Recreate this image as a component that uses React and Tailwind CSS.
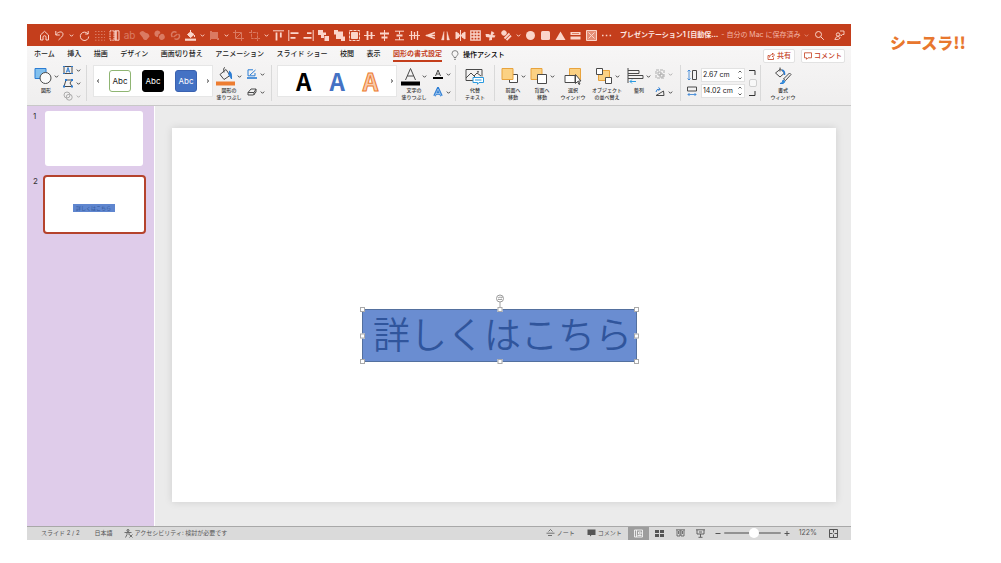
import React from 'react';
import { clsx } from 'clsx';

const Svg = ({ w = 11, h = 11, className, children }) => (
    <svg
        width={w}
        height={h}
        viewBox={`0 0 ${w} ${h}`}
        fill="none"
        stroke="currentColor"
        strokeWidth="1"
        className={clsx('shrink-0', className)}
        aria-hidden="true"
    >
        {children}
    </svg>
);

const Chevron = ({ className }) => (
    <Svg w={5} h={5} className={className}>
        <path d="M.8 1.6 2.5 3.3 4.2 1.6" />
    </Svg>
);

const Solid = ({ d, className }) => (
    <Svg className={className}>
        <path d={d} fill="currentColor" stroke="none" />
    </Svg>
);

/* ---------- quick access bar ---------- */

const quickItems = [
    { name: 'ホーム', icon: <Svg><path d="M1.500 5 5.500 1.300 9.500 5v5H7V7.200a1.500 1.500 0 0 0-3 0V10H1.500z" /></Svg> },
    { name: '元に戻す', icon: <Svg><path d="M1.800 1v4h4M2 4.800C4 1.200 9 1 9 4.200c0 2-2 3.300-4.500 5.800" /></Svg>, menu: true },
    { name: 'やり直し', icon: <Svg><path d="M9.200 1v3h-3M9 4A4.200 4.200 0 1 0 9.700 6.500" /></Svg> },
    { name: 'グリッド', dim: true, icon: <Svg><path d="M1 1.500h10M1 4.500h10M1 7.500h10M1 10.200h10" strokeDasharray="1.500 1.500" /></Svg> },
    { name: '選択', icon: <Svg><path d="M1 .8h5M1 10.200h5M1 1v9M5 1v9" strokeDasharray="1.500 .8" /><path d="M6 .8h4v9.400H6z" /><path d="M7 1v9" strokeWidth="1.500" /></Svg> },
    { name: '置換', dim: true, icon: <span className="text-[10px] leading-[11px]">ab</span> },
    { name: '接合', dim: true, icon: <Solid d="M.5 3.500Q1 1 4 1l3 2q3 0 3.500 3.500L7.500 10Q4 10 4 8z" /> },
    { name: '型抜き', dim: true, icon: <Solid d="M.5 4a3 3 0 0 1 6-1L4.500 4.500 4 7A3 3 0 0 1 .5 4zM5 6l2-2a3 3 0 1 1-2 4z" /> },
    { name: '重なり抽出', dim: true, icon: <Svg><path d="M6.500 2.500a3 3 0 1 0-4 4.500M4.500 8.500a3 3 0 1 0 4-4.500M3.500 7 7.500 4" strokeWidth="1.500" /></Svg> },
    { name: '塗りつぶし', icon: <Svg><path d="M0 9.700h11" strokeWidth="2.200" /><path d="m2.500 4.500 3-2.500L9 4.500 5.500 7.500zM5.500 0v4M9.500 5v2" fill="currentColor" /></Svg>, menu: true },
    { name: '図形の変更', dim: true, icon: <Solid d="M1 1h2v1h6v6h1v2H8V9H2v1H1z" />, menu: true },
    { name: 'トリミング', dim: true, icon: <Svg><path d="M2.500 0v8.500H11M0 2.500h8.500V11M8 3 3 8" /></Svg> },
    { name: '縦横比', dim: true, icon: <Svg><path d="M2.500 0v8.500H11M0 2.500h8.500V11" strokeDasharray="3 .8" /></Svg>, menu: true },
    { name: '上揃え', icon: <Svg><path d="M0 .8h11" /><path d="M3.500 2.500v8M7.800 2.500v5" strokeWidth="1.800" /></Svg> },
    { name: '左揃え', icon: <Svg><path d="M.8 0v11" /><path d="M2.500 3.200h8M2.500 7.800h5" strokeWidth="1.800" /></Svg> },
    { name: '右揃え', icon: <Svg><path d="M10.200 0v11" /><path d="M8.500 3.200H4M8.500 7.800H.5" strokeWidth="1.800" /></Svg> },
    { name: '前面へ移動', icon: <Solid d="M0 0h5v2.500h3V5H6v3H3V5H0zM6.500 6H11v5H6.500z" /> },
    { name: '背面へ移動', icon: <Solid d="M0 0h4v1.500h5V6.500h2V11H7V9H2V4.500H0z" /> },
    { name: '最前面', icon: <Svg><path d="M.5.5h10v10H.5z" strokeDasharray="3 1" /><path d="M2.500 2.500h6v6h-6z" fill="currentColor" /></Svg> },
    { name: '左右整列', icon: <Svg><path d="M3.500 1v9M7.500 2v7" strokeWidth="1.800" /><path d="M0 5.500h11" /></Svg> },
    { name: '上下中央', icon: <Svg><path d="M1 3.500h9M2.500 7.500h6" strokeWidth="1.800" /><path d="M5.500 0v11" /></Svg> },
    { name: '上下整列', icon: <Svg><path d="M1 1.200h9M1 9.800h9M5.500 1v3M5.500 7v3" /><path d="M2.500 5.500h6" strokeWidth="2" /></Svg> },
    { name: '左右中央', icon: <Svg><path d="M2.500 1v9M5.500 2v7M8.500 1v9" strokeWidth="1.300" /><path d="M0 5.500h11" /></Svg> },
    { name: '左右反転', icon: <Svg><path d="M10 2.500 2 5.500l8 3M1 5.500h9" strokeWidth="1.400" /></Svg> },
    { name: '上下反転', icon: <Svg><path d="M4 1.500 1.500 10H4zM7 1.500 9.500 10H7z" fill="currentColor" strokeWidth=".4" /></Svg> },
    { name: '分割', icon: <Svg><path d="M5.500 0v11M2 5.500h7" /><path d="M1 2v7l3-2V4zM10 2v7L7 7V4z" fill="currentColor" /></Svg> },
    { name: '表', icon: <Svg><path d="M.8.800h9.400v9.400H.8zM.8 4h9.400M.8 7h9.400M4 .8v9.400M7 .8v9.400" strokeWidth="1.300" /></Svg> },
    { name: '回転', icon: <Solid d="M.5 4h3l2 1 1-4 3 2-2 2 3 .5-1 2H7v2.500l-3 .5.500-3L1 7z" /> },
    { name: '図形', icon: <Svg><circle cx="3" cy="3" r="2.300" fill="currentColor" /><path d="M3.500 8.500 8.500 3.500M5.500 10.200l4.500-4.500" strokeWidth="1.900" /></Svg>, menu: true },
    { name: '円', icon: <Solid d="M5.500 1a4.500 4.500 0 1 1 0 9 4.500 4.500 0 0 1 0-9z" /> },
    { name: '四角形', icon: <Solid d="M2.500 1h6q1.500 0 1.500 1.500v6Q10 10 8.500 10h-6Q1 10 1 8.500v-6Q1 1 2.500 1z" /> },
    { name: '三角形', icon: <Solid d="M5.500 1.500 10.500 10H.5z" /> },
    { name: 'テキスト', icon: <Svg><path d="M.5 3.500h10M.5 8h10" strokeWidth="3" /><path d="M2 3.500h7" stroke="#d9694a" strokeWidth=".8" /></Svg> },
    { name: '削除', icon: <Svg><path d="M.5.5h10v10H.5z" fill="#e58d75" /><path d="m2.500 2.500 6 6M8.500 2.500l-6 6" /></Svg> },
    { name: 'その他', icon: <Svg><path d="M1 5.500h1.500M4.800 5.500h1.500M8.600 5.500h1.500" strokeWidth="1.500" /></Svg> },
];

const TitleBar = () => (
    <header className="flex h-[22px] items-center bg-[#c43e1c] pl-3 pr-[6px] text-[#fbd5ca]">
        <div className="flex w-[573px] shrink-0 items-center justify-between">
            {quickItems.map((item) => (
                <React.Fragment key={item.name}>
                    <button
                        aria-label={item.name}
                        className={clsx('flex w-[11px] justify-center', item.dim && 'opacity-40')}
                    >
                        {item.icon}
                    </button>
                    {item.menu && <Chevron />}
                </React.Fragment>
            ))}
        </div>
        <h1 className="ml-2 flex items-center gap-[3px] whitespace-nowrap text-[7px] leading-[10px]">
            <span className="font-bold text-[#fde9e4]">プレゼンテーション1 [自動保…</span>
            <span className="text-[#f3b5a5]">- 自分の Mac に保存済み</span>
            <Chevron className="opacity-50" />
        </h1>
        <div className="ml-auto flex items-center gap-[9px]">
            <button aria-label="検索">
                <Svg><circle cx="4.500" cy="4.500" r="3" /><path d="m6.800 6.800 3 3" /></Svg>
            </button>
            <button aria-label="共同編集">
                <Svg><circle cx="4" cy="4.500" r="1.700" /><path d="M.8 9.500q1-3 3-3t2.500 1.500q-1 2-5.500 1.500zM6 1h4v3.500H8.500L7 6V4.500" strokeWidth=".9" /></Svg>
            </button>
        </div>
    </header>
);

/* ---------- tabs ---------- */

const tabs = [
    'ホーム', '挿入', '描画', 'デザイン', '画面切り替え', 'アニメーション',
    'スライド ショー', '校閲', '表示', '図形の書式設定',
];

const Tabs = () => (
    <nav className="flex h-[17px] items-center pl-[7px] pr-[6px] text-[7px] font-medium leading-[10px]">
        <div className="flex w-[408px] shrink-0 justify-between whitespace-nowrap">
            {tabs.map((tab) => (
                <a
                    key={tab}
                    href="#"
                    className={clsx(
                        'border-b-2 pt-[2px] pb-px',
                        tab === '図形の書式設定'
                            ? 'border-[#c43e1c] font-bold text-[#c43e1c]'
                            : 'border-transparent text-[#222]',
                    )}
                >
                    {tab}
                </a>
            ))}
        </div>
        <button className="ml-[9px] flex items-center gap-1 whitespace-nowrap">
            <Svg w={8} h={10} className="text-[#666]">
                <path d="M3 7.500C3 6 1 5.500 1 3.600a3 3 0 0 1 6 0C7 5.500 5 6 5 7.500zM3 9.300h2" strokeWidth=".8" />
            </Svg>
            操作アシスト
        </button>
        <div className="ml-auto mt-[2px] flex gap-[6px] text-[#c43e1c]">
            <button className="flex h-[14px] items-center gap-[2px] whitespace-nowrap rounded-xs border border-[#e2e2e2] bg-white px-[3px]">
                <Svg w={8} h={8}><path d="M2.500 3.500H1v4h5.500V5.500M2.500 5.500c0-2.500 1.500-3 3-3V1l2 2-2 2V3.800" strokeWidth=".8" /></Svg>
                共有
            </button>
            <button className="flex h-[14px] items-center gap-[2px] whitespace-nowrap rounded-xs border border-[#e2e2e2] bg-white px-[2px]">
                <Svg w={8} h={8}><path d="M.5.800h7v5H4L2.500 7.300V5.800h-2z" strokeWidth=".8" /></Svg>
                コメント
            </button>
        </div>
    </nav>
);

/* ---------- ribbon ---------- */

const Group = ({ className, children }) => (
    <div className={clsx('flex h-9 shrink-0 border-r border-[#d9d9d9]', className)}>{children}</div>
);

const Tool = ({ icon, label, menu, className }) => (
    <button className={clsx('flex shrink-0 flex-col items-center', className)}>
        <span className="flex h-[22px] items-center gap-[2px] text-[#4a4a4a]">
            {icon}
            {menu && <Chevron />}
        </span>
        {label.map((line) => (
            <span key={line} className="whitespace-nowrap text-[5px] leading-[7px] font-medium">{line}</span>
        ))}
    </button>
);

const MiniTool = ({ name, icon, dim }) => (
    <button aria-label={name} className={clsx('flex items-center gap-[3px] text-[#4a4a4a]', dim && 'opacity-40')}>
        {icon}
        <Chevron />
    </button>
);

const Next = () => (
    <button aria-label="次のスタイル" className="ml-auto">
        <Svg w={4} h={6}><path d="M1 1.500 2.700 3 1 4.500" /></Svg>
    </button>
);

const styleSwatches = [
    'border-[#8fb573] bg-white text-[#222]',
    'border-black bg-black text-white',
    'border-[#3a62b0] bg-[#4472c4] text-white',
];

const Ribbon = () => (
    <section className="flex items-start border-b border-[#c8c8c8] pb-1 pt-[2px] text-[#333]" aria-label="リボン">
        <Group className="w-[60px] pl-[4px]">
            <Tool
                className="w-[30px]"
                label={['図形']}
                menu
                icon={
                    <Svg w={18} h={18}>
                        <path d="M1 1.500h11v10H1z" fill="#83c1ee" stroke="#2b7cd3" />
                        <circle cx="11.500" cy="11" r="5.500" fill="#fafafa" />
                    </Svg>
                }
            />
            <div className="ml-[2px] flex flex-col justify-between">
                <MiniTool name="テキスト ボックス" icon={<Svg w={10} h={10}><path d="M1 1.500h8v7H1z" /><path d="m3.300 7.500 1.700-5 1.700 5M4 6h2M0 1.500h2M8 1.500h2M0 8.500h2M8 8.500h2" stroke="#2b7cd3" /></Svg>} />
                <MiniTool name="図形の編集" icon={<Svg w={10} h={10}><path d="M3 2h6L7 5l2 3.500H1z" /><path d="M2 1h2v2H2zM8 1h2v2H8zM0 7.500h2V9.500H0zM8 7.500h2V9.500H8z" fill="#2b7cd3" stroke="none" /></Svg>} />
                <MiniTool name="図形の結合" dim icon={<Svg w={10} h={10}><circle cx="4" cy="4" r="3" /><circle cx="6.200" cy="6.200" r="3" /></Svg>} />
            </div>
        </Group>

        <Group className="w-[185px] pl-[6px]">
            <div className="flex h-8 w-[120px] items-center border border-[#e6e6e6] bg-white px-[2px]">
                <button aria-label="前のスタイル"><Svg w={4} h={6}><path d="M3 1.500 1.300 3 3 4.500" /></Svg></button>
                <div className="ml-[9px] flex gap-[11px]">
                    {styleSwatches.map((swatch) => (
                        <button key={swatch} className={clsx('h-[22px] w-[22px] rounded-[3px] border text-[8px] leading-[18px]', swatch)}>
                            Abc
                        </button>
                    ))}
                </div>
                <Next />
            </div>
            <Tool
                className="ml-px w-[30px]"
                label={['図形の', '塗りつぶし']}
                menu
                icon={
                    <Svg w={19} h={19}>
                        <path d="M4 7.500 10 2.500l4 6L8 12.500zM9 .5q-2 0-1 5" />
                        <path d="M13 4q3 1 2.500 8-1-3-3-4" fill="#2b7cd3" stroke="#2b7cd3" />
                        <path d="M0 16.500h19" stroke="#ed7d31" strokeWidth="4" />
                    </Svg>
                }
            />
            <div className="ml-[3px] flex flex-col justify-around">
                <MiniTool name="枠線" icon={<Svg w={10} h={10}><path d="M6 .8H1v6h7V4M3 6l5.500-5" stroke="#2b7cd3" /><path d="M0 9h10" stroke="#2b7cd3" strokeWidth="1.600" /></Svg>} />
                <MiniTool name="効果" icon={<Svg w={10} h={10}><path d="M1 5.500 4 2h5L7 5.500zM1 5.500V8h5.500L9 5V2M7 5.500V8" /></Svg>} />
            </div>
        </Group>

        <Group className="w-[184px] pl-[5px]">
            <div className="flex h-8 w-[120px] items-center border border-[#e6e6e6] bg-white pl-[18px] pr-[2px] font-['Noto_Sans_CJK_JP',sans-serif] text-[24px] font-bold leading-[30px]">
                <div className="flex gap-[18px]">
                    <button className="text-black">A</button>
                    <button className="text-[#4472c4]">A</button>
                    <button className="text-[#f8cbad] [-webkit-text-stroke:1px_#ed7d31]">A</button>
                </div>
                <Next />
            </div>
            <Tool
                className="ml-[2px] w-[30px]"
                label={['文字の', '塗りつぶし']}
                menu
                icon={
                    <Svg w={19} h={19}>
                        <path d="M4.500 13 9.500 1.500l5 11.500M6.300 9h6.400" />
                        <path d="M0 16.500h19" stroke="#000" strokeWidth="4" />
                    </Svg>
                }
            />
            <div className="ml-1 flex flex-col justify-around">
                <MiniTool name="文字の輪郭" icon={<Svg w={10} h={10}><path d="M2.500 7 5 1l2.500 6M3.500 5h3" /><path d="M0 9h10" stroke="#000" strokeWidth="2" /></Svg>} />
                <MiniTool name="文字の効果" icon={<Svg w={10} h={10}><path d="M1.500 9 5 1.500 8.500 9M3 6.500h4" stroke="#2b7cd3" strokeWidth="2.600" /><path d="M1.700 9 5 2l3.300 7M3 6.500h4" stroke="#cfe3f7" strokeWidth=".6" /></Svg>} />
            </div>
        </Group>

        <Group className="w-[39px] justify-center">
            <Tool
                label={['代替', 'テキスト']}
                icon={
                    <Svg w={19} h={18}>
                        <path d="M17 9.500v-7H1v11h7M1 11l5-5 5 5M9 9l3-3 4 3" />
                        <circle cx="13" cy="4.800" r=".6" />
                        <path d="M8 10.500h10.500v5H14l-1.500 1.800V15.500H8z" fill="#fff" stroke="#2b9be0" />
                        <path d="M10 13h6.500" stroke="#2b9be0" />
                    </Svg>
                }
            />
        </Group>

        <Group className="w-[186px] pl-[3px]">
            <Tool
                className="w-[30px]"
                label={['前面へ', '移動']}
                menu
                icon={<Svg w={18} h={18}><path d="M8.500 7.500h8v8h-8z" fill="#fff" /><path d="M1 1.500h11v11H1z" fill="#fbd183" stroke="#e8a33d" /></Svg>}
            />
            <Tool
                className="w-[28px]"
                label={['背面へ', '移動']}
                menu
                icon={<Svg w={18} h={18}><path d="M1 1.500h11v11H1z" fill="#fbd183" stroke="#e8a33d" /><path d="M7.500 7.500h9v9h-9z" fill="#fff" /></Svg>}
            />
            <Tool
                className="w-[34px]"
                label={['選択', 'ウインドウ']}
                icon={
                    <Svg w={18} h={18}>
                        <path d="M5.500 1.500h11v11h-11z" fill="#fbd183" stroke="#e8a33d" />
                        <path d="M1 8.500h10v7H1z" fill="#fff" />
                        <path d="M11.500 7.500v9l2-2 1.500 3 1-.5-1.500-3H17z" fill="#fff" />
                    </Svg>
                }
            />
            <Tool
                className="w-[34px]"
                label={['オブジェクト', 'の並べ替え']}
                menu
                icon={
                    <Svg w={18} h={18}>
                        <path d="M3.500 3.500h11v10h-11z" fill="#fbd183" stroke="#e8a33d" />
                        <path d="M1.500 1.500h6v6h-6zM10.500 10.500h6v6h-6z" fill="#fff" />
                    </Svg>
                }
            />
            <Tool
                className="w-[30px]"
                label={['整列']}
                menu
                icon={
                    <Svg w={17} h={18}>
                        <path d="M1 1v15M1 3.500h11v3H1M1 8.500h15v3H1" />
                        <path d="M9 14.500H3M5 12.500l-2 2 2 2" stroke="#2b9be0" />
                    </Svg>
                }
            />
            <div className="ml-px flex flex-col justify-around">
                <MiniTool name="グループ化" dim icon={<Svg w={10} h={10}><path d="M1 1h8v8H1z" strokeDasharray="3 1" /><path d="M3 3h3v3H3zM5 5h3v3H5z" /></Svg>} />
                <MiniTool name="回転" icon={<Svg w={10} h={10}><path d="M9 8.500H1L8.500 4z" /><path d="M1 5q0-3 4-3M3.500.5 5.300 2 3.500 3.800" stroke="#2b7cd3" /></Svg>} />
            </div>
        </Group>

        <Group className="w-[80px] gap-1 pl-[6px]">
            <div className="flex flex-col justify-between py-1 text-[#4a4a4a]">
                <Svg w={10} h={12}><path d="M5.500 1.500h4v9h-4z" /><path d="M2 1v10M.5 2.500 2 1l1.500 1.500M.5 9.500 2 11l1.500-1.500" stroke="#2b7cd3" strokeWidth=".8" /></Svg>
                <Svg w={10} h={12}><path d="M.5 2h9v4h-9z" /><path d="M1 9.500h8M2.500 8 1 9.500 2.500 11M7.500 8 9 9.500 7.500 11" stroke="#2b7cd3" strokeWidth=".8" /></Svg>
            </div>
            <div className="flex flex-col justify-between py-[3px]">
                {[['高さ', '2.67 cm'], ['幅', '14.02 cm']].map(([name, value]) => (
                    <div key={name} className="flex h-[14px] w-[44px] items-center border border-[#e2e2e2] bg-white pl-px">
                        <input
                            aria-label={name}
                            defaultValue={value}
                            className="w-[34px] bg-transparent text-[7px] leading-[10px] text-[#222] outline-none"
                        />
                        <Svg w={6} h={12}><path d="M1.500 3.500 3 2l1.500 1.500M1.500 8.500 3 10l1.500-1.500" strokeWidth=".8" /></Svg>
                    </div>
                ))}
            </div>
            <div className="flex flex-col items-center justify-between py-1">
                <Svg w={8} h={6}><path d="M0 1.500h6V6" /></Svg>
                <input type="checkbox" aria-label="縦横比を固定" className="size-2 shrink-0 appearance-none rounded-xs border border-[#cfcfcf] bg-[#f8f8f8]" />
                <Svg w={8} h={6}><path d="M0 4.500h6V0" /></Svg>
            </div>
        </Group>

        <Tool
            className="ml-[7px] w-[30px]"
            label={['書式', 'ウィンドウ']}
            icon={
                <Svg w={18} h={18}>
                    <path d="M1.500 6 6.500 2l4 4L6 10zM6 .5v4" />
                    <path d="M8 3q3 1 2.500 5" stroke="#2b7cd3" strokeWidth="1.500" />
                    <path d="m9.500 12 6-6 1.500 1.500-5.500 6z" />
                    <path d="M6 16.500q3 0 3-3.500l2 1.500q-1 3-5 2z" fill="#2b9be0" stroke="#2b7cd3" />
                </Svg>
            }
        />
    </section>
);

/* ---------- workspace ---------- */

const Thumbnails = () => (
    <aside className="w-[128px] shrink-0 border-r border-white bg-[#dfccea] pl-[6px] pt-[5px] text-[8px] leading-[10px] text-[#333]">
        <a href="#" className="flex items-start gap-[7px]">
            <span className="w-[5px]">1</span>
            <span className="h-[55px] w-[98px] rounded-[3px] bg-white" />
        </a>
        <a href="#" className="mt-[9px] flex items-start gap-[5px]">
            <span className="w-[5px] pt-px">2</span>
            <span className="flex h-[59px] w-[103px] items-center justify-center rounded-[4px] border-2 border-[#b5432d] bg-white pr-[2px] pt-[7px]">
                <span className="h-2 w-[42px] bg-[#5f86cf] text-center text-[5px] leading-[8px] text-[#2f5597]">詳しくはこちら</span>
            </span>
        </a>
    </aside>
);

// selection handles, clockwise from the top left corner
const handles = [
    '-left-[3px] -top-[3px]',
    'left-1/2 -top-[3px] -translate-x-1/2',
    '-right-[3px] -top-[3px]',
    '-right-[3px] top-1/2 -translate-y-1/2',
    '-right-[3px] -bottom-[3px]',
    'left-1/2 -bottom-[3px] -translate-x-1/2',
    '-left-[3px] -bottom-[3px]',
    '-left-[3px] top-1/2 -translate-y-1/2',
];

const Canvas = () => (
    <main className="min-w-0 flex-1 bg-[#ebebeb] pb-6 pl-[17px] pr-[15px] pt-[22px]">
        <div className="relative aspect-video bg-white shadow-[0_0_8px_rgba(0,0,0,0.12)]">
            <div className="absolute left-[190px] top-[181px] flex h-[53px] w-[275px] items-center justify-center border border-[#53709f] bg-[#6a8dd1] pl-[6px]">
                <span className="whitespace-nowrap text-[37px] font-[350] leading-none text-[#30559c]">詳しくはこちら</span>
                <Svg w={9} h={14} className="absolute -top-[16px] left-1/2 -translate-x-1/2 text-[#999]">
                    <circle cx="4.500" cy="4.500" r="3.500" fill="#fff" />
                    <path d="M2.500 4q2-2 4 0V2.500M2.500 5.500h4M4.500 8v6" strokeWidth=".9" />
                </Svg>
                {handles.map((pos) => (
                    <span key={pos} className={clsx('absolute size-[5px] border border-[#aaa] bg-white', pos)} />
                ))}
            </div>
        </div>
    </main>
);

/* ---------- status bar ---------- */

const StatusBar = () => (
    <footer className="flex h-[14px] items-center whitespace-nowrap border-t border-[#a8a8a8] bg-[#dadada] pl-[14px] pr-[13px] text-[6px] leading-[10px] text-[#555]">
        <span>スライド 2 / 2</span>
        <span className="ml-[15px]">日本語</span>
        <button className="ml-[11px] flex items-center gap-[2px]">
            <Svg w={9} h={9}>
                <circle cx="4" cy="1.500" r="1" />
                <path d="M.5 3.500h7M3 3.500v2L1.500 8.500M5 3.500v2l1 1M5.500 5.500l3 3M8.500 5.500l-3 3" strokeWidth=".8" />
            </Svg>
            アクセシビリティ: 検討が必要です
        </button>
        <button className="ml-auto flex items-center gap-[2px]">
            <Svg w={9} h={8}><path d="M2.500 2.500 4.500.5l2 2M.5 4.200h8M2 6.500h4" strokeWidth=".8" /></Svg>
            ノート
        </button>
        <button className="ml-3 flex items-center gap-[2px]">
            <Svg w={9} h={8}><path d="M.5.500h8V6H4.500L3 7.500V6H.5z" fill="currentColor" stroke="none" /></Svg>
            コメント
        </button>
        <div className="ml-[6px] flex items-center">
            <button aria-label="標準" className="flex h-[13px] w-[21px] items-center justify-center bg-[#9d9d9d] text-white">
                <Svg w={9} h={9}><path d="M.5 1h8v7h-8zM2.500 1v7M4.500 3h2.500v2H4.500zM3.500 6.500h4" strokeWidth=".8" /></Svg>
            </button>
            <button aria-label="一覧" className="flex w-[21px] justify-center">
                <Svg w={9} h={7}><path d="M0 0h4v3H0zM5 0h4v3H5zM0 4h4v3H0zM5 4h4v3H5z" fill="currentColor" stroke="none" /></Svg>
            </button>
            <button aria-label="閲覧表示" className="flex w-[21px] justify-center">
                <Svg w={9} h={8}><path d="M0 .8h9M1 1v6h3V1M5 1v6h3V1M2.500 2v3M6.500 2v3" strokeWidth=".8" /></Svg>
            </button>
            <button aria-label="スライド ショー" className="flex w-[20px] justify-center">
                <Svg w={9} h={9}><path d="M0 .8h9M1 1v4h7V1M3 3h3M4.500 5v3M2.500 8.300h4" strokeWidth=".9" /></Svg>
            </button>
        </div>
        <button aria-label="縮小" className="ml-1 h-[5px] w-[6px]">
            <Svg w={6} h={5}><path d="M.5 2.500h5" /></Svg>
        </button>
        <input
            type="range"
            aria-label="ズーム"
            defaultValue="53"
            className="mx-[3px] h-[9px] w-[57px] appearance-none bg-transparent [&::-webkit-slider-runnable-track]:h-[2px] [&::-webkit-slider-runnable-track]:rounded-full [&::-webkit-slider-runnable-track]:bg-[#929292] [&::-webkit-slider-thumb]:-mt-[4px] [&::-webkit-slider-thumb]:size-[10px] [&::-webkit-slider-thumb]:appearance-none [&::-webkit-slider-thumb]:rounded-full [&::-webkit-slider-thumb]:bg-white"
        />
        <button aria-label="拡大" className="h-[5px] w-[6px]">
            <Svg w={6} h={5}><path d="M.5 2.500h5M3 0v5" /></Svg>
        </button>
        <span className="ml-[9px] text-[7px]">122%</span>
        <button aria-label="ウィンドウに合わせる" className="ml-3">
            <Svg w={9} h={9}><path d="M.5.5h8v8h-8z" /><path d="M4.500 1v2.500M4.500 5.500V8M1 4.500h2.500M5.500 4.500H8" /></Svg>
        </button>
    </footer>
);

const App = () => (
    <div className="flex min-h-screen bg-white pl-[27px] pt-6 font-['Inter','Noto_Sans_CJK_JP',sans-serif]">
        <div className="min-w-0 flex-1 self-start">
            <TitleBar />
            <div className="bg-linear-to-b from-[#f7f6f6] to-[#efeeee]">
                <Tabs />
                <Ribbon />
            </div>
            <div className="flex">
                <Thumbnails />
                <Canvas />
            </div>
            <StatusBar />
        </div>
        <div className="w-[150px] shrink-0 pl-[39px] pt-[6px]">
            <p className="whitespace-nowrap font-['Noto_Sans_CJK_JP',sans-serif] text-[16px] font-black leading-6 text-[#e8772e]">シースラ!!</p>
        </div>
    </div>
);

export default App;
